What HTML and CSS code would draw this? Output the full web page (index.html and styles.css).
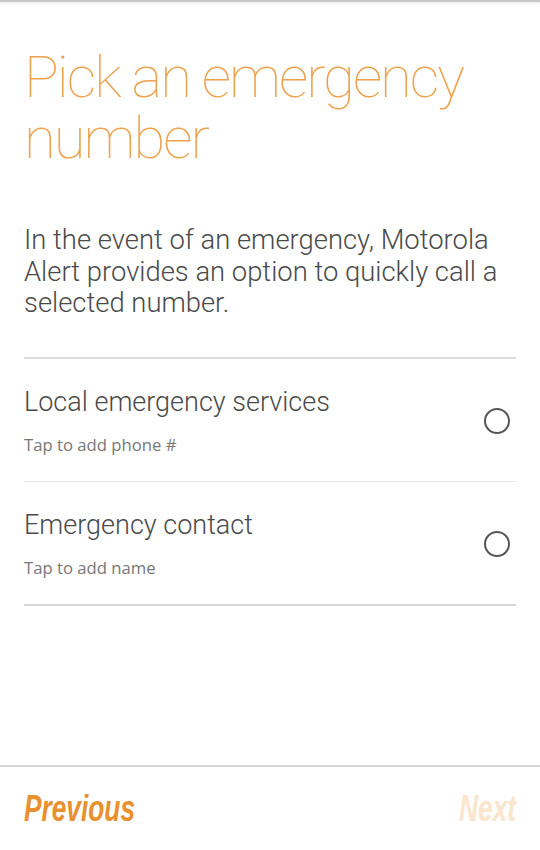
FILE: index.html
```html
<!DOCTYPE html>
<html lang="en">
<head>
    <meta charset="UTF-8">
    <meta name="viewport" content="width=device-width, initial-scale=1.0">
    <title>Pick an emergency number</title>
    <link rel="stylesheet" href="styles.css">
</head>
<body>
    <div class="top-bar"></div>

    <main>
        <h1 class="title">Pick an emergency number</h1>
        <p class="intro">In the event of an emergency, Motorola Alert provides an option to quickly call a selected number.</p>

        <!-- Opcoes de numero -->
        <ul class="options">
            <li class="option">
                <div class="option-text">
                    <div class="option-name">Local emergency services</div>
                    <div class="option-hint">Tap to add phone #</div>
                </div>
                <span class="radio"></span>
            </li>
            <li class="option">
                <div class="option-text">
                    <div class="option-name">Emergency contact</div>
                    <div class="option-hint">Tap to add name</div>
                </div>
                <span class="radio"></span>
            </li>
        </ul>
    </main>

    <footer>
        <span class="nav-btn prev">Previous</span>
        <span class="nav-btn next">Next</span>
    </footer>
</body>
</html>
```

FILE: styles.css
```css
html, body {
    margin: 0;
    padding: 0;
    height: 100%;
}

body {
    font-family: Roboto, "Liberation Sans", sans-serif;
    background-color: #fff;
    color: #444;
    display: flex;
    flex-direction: column;
    height: 850px;
}

.top-bar {
    height: 2px;
    background-color: #c8c8c8;
    box-shadow: 0 1px 3px rgba(0, 0, 0, 0.12);
}

main {
    flex: 1;
    padding: 0 24px;
}

.title {
    margin: 45px 0 0 0;
    font-size: 58px;
    line-height: 61px;
    font-weight: 100;
    letter-spacing: -2px;
    color: #eea24e;
}

.intro {
    margin: 56px 0 0 0;
    font-size: 27.4px;
    line-height: 31.5px;
    font-weight: 300;
    color: #4a4a4a;
}

.options {
    list-style: none;
    margin: 37px 0 0 0;
    padding: 0;
    border-top: 2px solid #dcdcdc;
    border-bottom: 2px solid #d6d6d6;
}

.option {
    display: flex;
    align-items: center;
    justify-content: space-between;
    padding: 28px 6px 26px 0;
}

.option + .option {
    border-top: 1px solid #e6e6e6;
}

.option-name {
    font-size: 27px;
    line-height: 31px;
    font-weight: 300;
    color: #4a4a4a;
}

.option-hint {
    margin-top: 17px;
    font-family: "Open Sans", "Noto Sans", sans-serif;
    font-size: 16.7px;
    line-height: 20px;
    color: #777;
}

.radio {
    width: 22px;
    height: 22px;
    border: 2px solid #555;
    border-radius: 50%;
}

footer {
    height: 83px;
    border-top: 2px solid #d6d6d6;
    display: flex;
    align-items: center;
    justify-content: space-between;
    padding: 0 24px;
}

.nav-btn {
    font-family: "Liberation Sans", Arial, sans-serif;
    font-size: 36px;
    font-weight: bold;
    font-style: italic;
    display: inline-block;
    transform: scaleX(0.73);
}

.prev {
    color: #e8912e;
    transform-origin: left center;
}

.next {
    color: #fbe5cd;
    transform-origin: right center;
}
```
